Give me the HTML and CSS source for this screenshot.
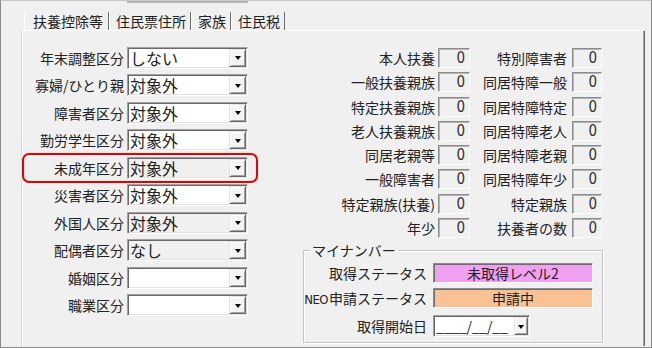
FILE: index.html
```html
<!DOCTYPE html>
<html lang="ja">
<head>
    <meta charset="UTF-8">
    <title>扶養控除等</title>
    <link rel="stylesheet" href="styles.css">
</head>
<body>
<div class="window">
    <div class="topclip"><div class="clip-bar"></div></div>

    <!-- Tabs -->
    <div class="tabs">
        <div class="tab active">扶養控除等</div>
        <div class="tab">住民票住所</div>
        <div class="tab">家族</div>
        <div class="tab">住民税</div>
    </div>

    <div class="panel">
        <!-- Left: category combos -->
        <div class="left-col">
            <div class="row"><span class="label">年末調整区分</span><div class="combo"><span class="combo-text">しない</span><span class="combo-btn"></span></div></div>
            <div class="row"><span class="label">寡婦/ひとり親</span><div class="combo"><span class="combo-text">対象外</span><span class="combo-btn"></span></div></div>
            <div class="row"><span class="label">障害者区分</span><div class="combo"><span class="combo-text">対象外</span><span class="combo-btn"></span></div></div>
            <div class="row"><span class="label">勤労学生区分</span><div class="combo"><span class="combo-text">対象外</span><span class="combo-btn"></span></div></div>
            <div class="row marked"><span class="label">未成年区分</span><div class="combo gray"><span class="combo-text">対象外</span><span class="combo-btn"></span></div></div>
            <div class="row"><span class="label">災害者区分</span><div class="combo"><span class="combo-text">対象外</span><span class="combo-btn"></span></div></div>
            <div class="row"><span class="label">外国人区分</span><div class="combo gray"><span class="combo-text">対象外</span><span class="combo-btn"></span></div></div>
            <div class="row"><span class="label">配偶者区分</span><div class="combo gray"><span class="combo-text">なし</span><span class="combo-btn"></span></div></div>
            <div class="row"><span class="label">婚姻区分</span><div class="combo"><span class="combo-text"></span><span class="combo-btn"></span></div></div>
            <div class="row"><span class="label">職業区分</span><div class="combo"><span class="combo-text"></span><span class="combo-btn"></span></div></div>
        </div>

        <!-- Right: counts and my number -->
        <div class="right-col">
            <div class="counts">
                <span class="count-label">本人扶養</span><span class="count-box">0</span>
                <span class="count-label second">特別障害者</span><span class="count-box">0</span>
                <span class="count-label">一般扶養親族</span><span class="count-box">0</span>
                <span class="count-label second">同居特障一般</span><span class="count-box">0</span>
                <span class="count-label">特定扶養親族</span><span class="count-box">0</span>
                <span class="count-label second">同居特障特定</span><span class="count-box">0</span>
                <span class="count-label">老人扶養親族</span><span class="count-box">0</span>
                <span class="count-label second">同居特障老人</span><span class="count-box">0</span>
                <span class="count-label">同居老親等</span><span class="count-box">0</span>
                <span class="count-label second">同居特障老親</span><span class="count-box">0</span>
                <span class="count-label">一般障害者</span><span class="count-box">0</span>
                <span class="count-label second">同居特障年少</span><span class="count-box">0</span>
                <span class="count-label">特定親族(扶養)</span><span class="count-box">0</span>
                <span class="count-label second">特定親族</span><span class="count-box">0</span>
                <span class="count-label">年少</span><span class="count-box">0</span>
                <span class="count-label second">扶養者の数</span><span class="count-box">0</span>
            </div>

            <fieldset class="mynumber">
                <legend>マイナンバー</legend>
                <div class="mn-row"><span class="mn-label">取得ステータス</span><span class="status pink">未取得レベル2</span></div>
                <div class="mn-row gap"><span class="mn-label"><span class="narrow">NEO</span>申請ステータス</span><span class="status peach">申請中</span></div>
                <div class="mn-row date-row"><span class="mn-label">取得開始日</span><div class="date"><span class="date-text">____/__/__</span><span class="combo-btn small"></span></div></div>
            </fieldset>
        </div>
    </div>
</div>
</body>
</html>
```

FILE: styles.css
```css
html, body {
    margin: 0;
    padding: 0;
}

body {
    width: 652px;
    height: 348px;
    background: #f0f0f0;
    font-family: "Noto Sans CJK JP", sans-serif;
    font-size: 14px;
    color: #222;
}

.window {
    box-sizing: border-box;
    width: 652px;
    height: 348px;
    border: 1px solid #8a8a8a;
    border-top-color: #c8c8c8;
    overflow: hidden;
}

.topclip {
    height: 11px;
    padding-left: 126px;
}

.clip-bar {
    width: 121px;
    height: 2px;
    background: #b4b4b4;
}

/* tabs */
.tabs {
    display: flex;
    height: 18px;
    margin-left: 23px;
}

.tab {
    height: 18px;
    line-height: 18px;
    padding: 0 4px 0 6px;
    border-left: 1px solid #fff;
    border-right: 1px solid #6d6d6d;
    box-sizing: border-box;
    white-space: nowrap;
}

.tab.active {
    padding: 0 5px 0 8px;
}

/* panel */
.panel {
    box-sizing: border-box;
    display: flex;
    width: 623px;
    height: 316px;
    margin-left: 21px;
    border-top: 1px solid #fff;
    border-left: 1px solid #fff;
    border-right: 1px solid #6d6d6d;
    box-shadow: inset -1px 0 #a0a0a0, -1px 0 #dadada;
}

.left-col {
    width: 225px;
    padding-top: 15.5px;
    display: flex;
    flex-direction: column;
    gap: 5.5px;
}

.row {
    position: relative;
    display: flex;
    align-items: center;
    height: 22px;
}

.label {
    width: 101px;
    margin-right: 3px;
    display: flex;
    justify-content: flex-end;
    white-space: nowrap;
}

.row.marked::after {
    content: "";
    position: absolute;
    left: -1px;
    right: -10px;
    top: -3.5px;
    bottom: -4.5px;
    border: 2.5px solid #e60000;
    border-radius: 7px;
}

.combo {
    box-sizing: border-box;
    display: flex;
    width: 121px;
    height: 22px;
    padding: 1px;
    background: #fff;
    border: 1px solid;
    border-color: #a0a0a0 #fff #fff #a0a0a0;
    box-shadow: inset 1px 1px #696969, inset -1px -1px #e3e3e3;
}

.combo.gray {
    background: #f0f0f0;
}

.combo-text {
    flex: 1;
    padding-left: 1px;
    font-size: 16px;
    line-height: 18px;
    white-space: nowrap;
}

.combo-btn {
    box-sizing: border-box;
    display: flex;
    align-items: center;
    justify-content: center;
    width: 17px;
    height: 18px;
    background: #f4f4f4;
    border: 1px solid;
    border-color: #e3e3e3 #696969 #696969 #e3e3e3;
    box-shadow: inset 1px 1px #fff, inset -1px -1px #a0a0a0;
}

.combo-btn::after {
    content: "";
    border-left: 3.5px solid transparent;
    border-right: 3.5px solid transparent;
    border-top: 4px solid #000;
    margin-top: 1px;
}

.combo-btn.small {
    width: 14px;
}

/* right side */
.right-col {
    padding-top: 17px;
}

.counts {
    display: grid;
    grid-template-columns: 190px 32px 102px 30px;
    grid-auto-rows: 20px;
    row-gap: 4.3px;
}

.count-label {
    display: flex;
    justify-content: flex-end;
    align-items: center;
    padding-right: 3px;
    white-space: nowrap;
}

.count-label.second {
    padding-right: 5px;
}

.count-box {
    box-sizing: border-box;
    padding-right: 4px;
    text-align: right;
    font-family: "Liberation Sans Narrow", "DejaVu Sans", sans-serif;
    font-stretch: condensed;
    font-size: 15px;
    line-height: 18px;
    color: #333;
    border: 1px solid;
    border-color: #8c8c8c #fff #fff #8c8c8c;
    box-shadow: inset 1px 1px #b4b4b4;
}

.mynumber {
    box-sizing: border-box;
    width: 300px;
    margin: 4px 0 0 55px;
    padding: 5px 0;
    min-width: 0;
    border: 1px solid #c4c4c4;
    box-shadow: inset 1px 1px #fff, 1px 1px #fff;
}

.mynumber legend {
    margin-left: 6px;
    padding: 0 2px;
    line-height: 16px;
}

.mn-row {
    display: flex;
    align-items: center;
    height: 20px;
    margin-bottom: 5px;
}

.mn-row.gap {
    margin-bottom: 7px;
}

.mn-row.date-row {
    height: 22px;
    margin-bottom: 0;
}

.mn-label {
    width: 123px;
    margin-right: 6px;
    display: flex;
    justify-content: flex-end;
    align-items: baseline;
    white-space: nowrap;
}

.narrow {
    font-family: "Liberation Sans Narrow", "DejaVu Sans", sans-serif;
    font-stretch: condensed;
    font-size: 13px;
    letter-spacing: -0.5px;
    margin-right: 1px;
}

.status {
    box-sizing: border-box;
    width: 160px;
    height: 20px;
    line-height: 18px;
    text-align: center;
    border: 1px solid;
    border-color: #8c8c8c #fff #fff #8c8c8c;
    box-shadow: inset 1px 1px #6d6d6d;
}

.status.pink {
    background: #f0a0f0;
}

.status.peach {
    background: #fac193;
}

.date {
    box-sizing: border-box;
    display: flex;
    width: 97px;
    height: 22px;
    padding: 1px;
    background: #fff;
    border: 1px solid;
    border-color: #a0a0a0 #fff #fff #a0a0a0;
    box-shadow: inset 1px 1px #696969, inset -1px -1px #e3e3e3;
}

.date-text {
    flex: 1;
    padding-left: 1px;
    font-size: 14px;
    letter-spacing: -0.2px;
    line-height: 18px;
    white-space: nowrap;
    overflow: hidden;
}
```
